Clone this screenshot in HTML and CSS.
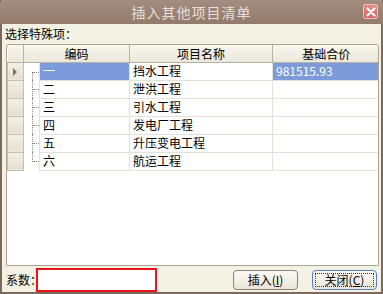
FILE: index.html
```html
<!DOCTYPE html>
<html lang="zh">
<head>
  <meta charset="UTF-8">
  <title>插入其他项目清单</title>
  <link rel="stylesheet" href="styles.css">
</head>
<body>

<div class="window">
  <div class="titlebar">
    <span class="title">插入其他项目清单</span>
    <span class="close">
      <svg width="10" height="10" viewBox="0 0 10 10">
        <path d="M1.5 1.5 L8.5 8.5 M8.5 1.5 L1.5 8.5" stroke="#fff" stroke-width="2.2" stroke-linecap="round"/>
      </svg>
    </span>
  </div>

  <div class="content">
    <div class="caption">选择特殊项：</div>

    <div class="grid">
      <table>
        <colgroup>
          <col class="c-hdr">
          <col class="c-tree">
          <col class="c-code">
          <col class="c-name">
          <col class="c-price">
        </colgroup>
        <thead>
          <tr>
            <th class="corner"></th>
            <th colspan="2">编码</th>
            <th>项目名称</th>
            <th class="last">基础合价</th>
          </tr>
        </thead>
        <tbody>
          <tr class="current">
            <td class="rowhdr"><span class="arrow"></span></td>
            <td class="tree first"></td>
            <td class="sel">一</td>
            <td>挡水工程</td>
            <td class="sel">981515.93</td>
          </tr>
          <tr>
            <td class="rowhdr"></td>
            <td class="tree"></td>
            <td>二</td>
            <td>泄洪工程</td>
            <td></td>
          </tr>
          <tr>
            <td class="rowhdr"></td>
            <td class="tree"></td>
            <td>三</td>
            <td>引水工程</td>
            <td></td>
          </tr>
          <tr>
            <td class="rowhdr"></td>
            <td class="tree"></td>
            <td>四</td>
            <td>发电厂工程</td>
            <td></td>
          </tr>
          <tr>
            <td class="rowhdr"></td>
            <td class="tree"></td>
            <td>五</td>
            <td>升压变电工程</td>
            <td></td>
          </tr>
          <tr>
            <td class="rowhdr"></td>
            <td class="tree last"></td>
            <td>六</td>
            <td>航运工程</td>
            <td></td>
          </tr>
        </tbody>
      </table>
    </div>

    <div class="footer">
      <span class="label">系数：</span>
      <input class="ratio" type="text">
      <span class="spacer"></span>
      <button class="btn">插入(<u>I</u>)</button>
      <button class="btn default"><span class="focus">关闭(<u>C</u>)</span></button>
    </div>
  </div>
</div>

</body>
</html>
```

FILE: styles.css
```css
* {
  box-sizing: border-box;
}

body {
  margin: 0;
  background: #ece9d8;
  font-family: "Noto Sans CJK SC", "Liberation Sans", sans-serif;
  font-size: 12px;
  color: #000;
}

.window {
  width: 383px;
  height: 294px;
  display: flex;
  flex-direction: column;
  background: #f3f0e4;
  border-left: 2px solid #7d685c;
  border-right: 2px solid #7d685c;
  border-bottom: 2px solid #7d685c;
}

.titlebar {
  height: 24px;
  margin: 0 -2px;
  background: linear-gradient(#a38d80, #927a6c);
  border-radius: 4px 4px 0 0;
  display: flex;
  align-items: center;
  justify-content: center;
  position: relative;
}

.title {
  color: #e6dfda;
  font-size: 14px;
  letter-spacing: 1px;
}

.close {
  position: absolute;
  right: 5px;
  top: 4px;
  width: 15px;
  height: 15px;
  border: 1px solid #f2c0bd;
  border-radius: 2px;
  background: linear-gradient(#e68b87, #d4645f);
  display: flex;
  align-items: center;
  justify-content: center;
}

.content {
  flex: 1;
  display: flex;
  flex-direction: column;
  padding: 2px 2px 0 3px;
}

.caption {
  height: 18px;
  line-height: 16px;
}

.grid {
  height: 222px;
  width: 373px;
  margin-left: 1px;
  background: #fff;
  border: 1px solid #a9a394;
  border-radius: 3px 3px 0 0;
  overflow: hidden;
}

table {
  border-collapse: collapse;
  table-layout: fixed;
  width: 372px;
}

.c-hdr { width: 16px; }
.c-tree { width: 16px; }
.c-code { width: 90px; }
.c-name { width: 143px; }
.c-price { width: 107px; }

thead tr {
  height: 17px;
}

tbody tr {
  height: 18px;
}

th {
  font-weight: normal;
  text-align: center;
  padding: 0;
  background: linear-gradient(#f7f5ee, #ebe7da);
  border-right: 1px solid #b7b1a2;
  border-bottom: 1px solid #b7b1a2;
  line-height: 15px;
}

th.last {
  border-right: none;
}

td {
  padding: 0 0 0 3px;
  line-height: 16px;
  border: 1px solid #e4e1d8;
  white-space: nowrap;
}

td.rowhdr {
  padding: 0;
  background: linear-gradient(#f3f0e6, #e4dfd0);
  border: 1px solid #c6bfae;
  border-top-color: #fbfaf6;
  position: relative;
}

.arrow {
  position: absolute;
  left: 5px;
  top: 5px;
  border-left: 4px solid #7a7466;
  border-top: 4px solid transparent;
  border-bottom: 4px solid transparent;
}

td.tree {
  border: none;
  position: relative;
  padding: 0;
}

td.tree::before {
  content: "";
  position: absolute;
  left: 8px;
  top: 0;
  bottom: 0;
  border-left: 1px dotted #8c8c8c;
}

td.tree::after {
  content: "";
  position: absolute;
  left: 9px;
  right: 0;
  top: 9px;
  border-top: 1px dotted #8c8c8c;
}

td.tree.first::before {
  top: 9px;
}

td.tree.last::before {
  bottom: 8px;
}

td.sel {
  background: #7d9bdb;
  color: #fff;
}

.footer {
  flex: 1;
  display: flex;
  align-items: center;
  padding-top: 1px;
}

.label {
  width: 31px;
  white-space: nowrap;
  flex-shrink: 0;
  padding-left: 1px;
}

.ratio {
  width: 121px;
  height: 24px;
  border: 2px solid #e8141b;
  background: #fff;
  margin: 0;
  padding: 0;
  flex-shrink: 0;
  position: relative;
}

.spacer {
  flex: 1;
}

.btn {
  width: 65px;
  height: 20px;
  padding: 0;
  font-family: inherit;
  font-size: 12px;
  color: #000;
  border: 1px solid #8a8478;
  border-radius: 4px;
  background: linear-gradient(#fbfaf6, #e9e5d7);
  margin-left: 14px;
  display: flex;
  align-items: center;
  justify-content: center;
  flex-shrink: 0;
}

.btn u {
  text-decoration: underline;
}

.btn.default {
  border-color: #5a7fc0;
  margin-right: 2px;
}

.focus {
  display: flex;
  align-items: center;
  justify-content: center;
  width: 59px;
  height: 14px;
  border: 1px dotted #333;
}
```
